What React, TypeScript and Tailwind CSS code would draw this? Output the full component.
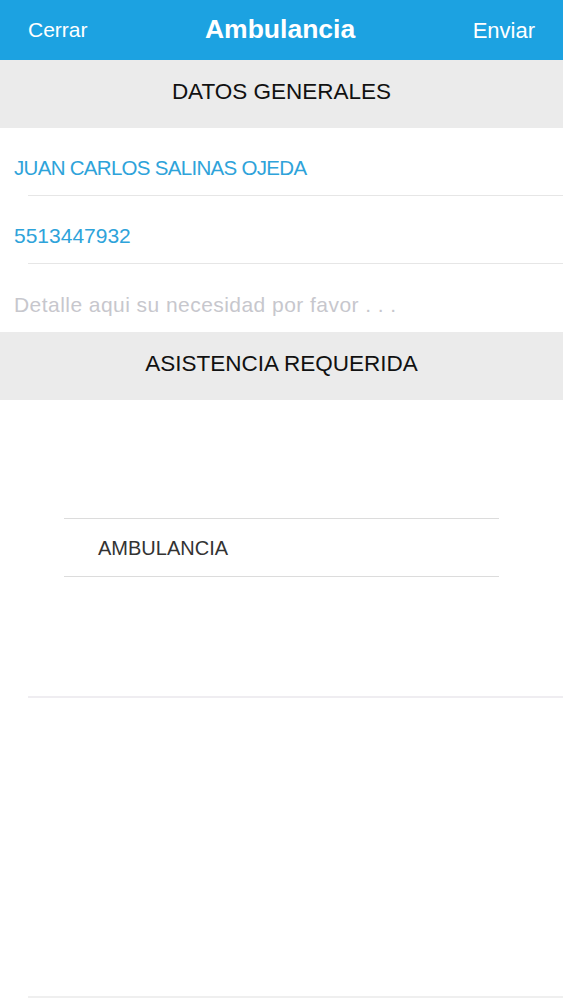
import React from 'react'

const font = { fontFamily: '"Liberation Sans", Arial, sans-serif' }

// ─── Section header ──────────────────────────────────────────────────────────
const SectionHeader: React.FC<{ title: string }> = ({ title }) => (
  <div className="h-[68px] bg-[#ebebeb] flex items-center justify-center pb-1 text-[22.5px] text-[#111]">
    {title}
  </div>
)

// ─── Form row ────────────────────────────────────────────────────────────────
const Row: React.FC<{ value: string; className: string; border?: boolean }> = ({ value, className, border = true }) => (
  <div className="h-[68px] flex flex-col">
    <div className={`flex-1 flex items-center pl-[14px] pt-[13px] ${className}`}>{value}</div>
    {border && <div className="ml-[28px] h-px bg-[#e6e6e6]" />}
  </div>
)

export default function App() {
  return (
    <div className="w-[563px] h-[1000px] bg-white flex flex-col overflow-hidden" style={font}>
      {/* Nav bar */}
      <div className="h-[60px] bg-[#1ca2e1] flex items-center justify-between px-[28px] text-white">
        <span className="text-[21px]">Cerrar</span>
        <span className="text-[26.5px] font-bold">Ambulancia</span>
        <span className="text-[22px]">Enviar</span>
      </div>

      <SectionHeader title="DATOS GENERALES" />
      <Row value="JUAN CARLOS SALINAS OJEDA" className="text-[20.5px] text-[#2ea3da] tracking-[-0.7px]" />
      <Row value="5513447932" className="text-[21px] text-[#2ea3da]" />
      <Row value="Detalle aqui su necesidad por favor . . ." className="text-[21px] text-[#c7c7cd] tracking-[0.45px]" border={false} />
      <SectionHeader title="ASISTENCIA REQUERIDA" />

      {/* Picker */}
      <div className="h-[298px] flex flex-col">
        <div className="mt-[118px] mx-[64px] h-[59px] border-y border-[#dcdcdc] flex items-center pl-[34px] text-[20px] text-[#333]">
          AMBULANCIA
        </div>
        <div className="flex-1" />
        <div className="ml-[28px] h-[2px] bg-[#efedf1]" />
      </div>

      <div className="flex-1 flex flex-col">
        <div className="flex-1" />
        <div className="ml-[28px] h-[2px] bg-[#efefef] mb-[2px]" />
      </div>
    </div>
  )
}
